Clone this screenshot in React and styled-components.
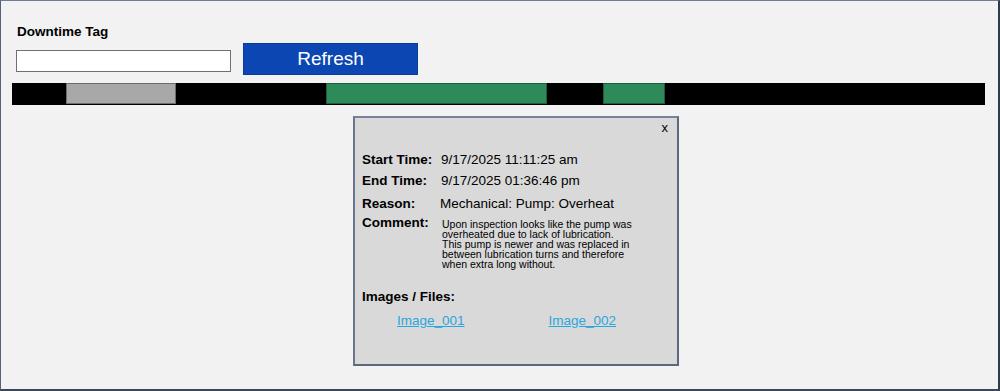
import React from 'react';
import styled, { createGlobalStyle } from 'styled-components';

const GlobalStyle = createGlobalStyle`
  html, body {
    margin: 0;
    padding: 0;
    background: #f2f2f2;
  }
  * {
    box-sizing: border-box;
  }
`;

const Frame = styled.div`
  width: 1000px;
  height: 391px;
  background: #f2f2f2;
  border-top: 1px solid #6f7b93;
  border-left: 1px solid #55627a;
  border-right: 2px solid #2f3a4b;
  border-bottom: 2px solid #3b4659;
  padding: 0 0 0 11px;
  font-family: 'Liberation Sans', Arial, sans-serif;
  color: #000;
`;

const Header = styled.div`
  padding-left: 4px;
`;

const Label = styled.div`
  margin-top: 23px;
  font-size: 13.5px;
  font-weight: bold;
  line-height: 15px;
  padding-left: 1px;
`;

const Controls = styled.div`
  display: flex;
  align-items: flex-start;
  gap: 12px;
  margin-top: 4px;
`;

const TagInput = styled.input`
  width: 215px;
  height: 22px;
  margin-top: 7px;
  border: 1px solid #707070;
  background: #fff;
  padding: 0 4px;
  font: inherit;
  outline: none;
`;

const RefreshButton = styled.button`
  width: 175px;
  height: 32px;
  background: #0b46b3;
  border: 1px solid #0a3c9a;
  color: #fff;
  font-family: 'Liberation Sans', Arial, sans-serif;
  font-size: 19px;
  padding: 0;
  cursor: pointer;
`;

const Timeline = styled.div`
  position: relative;
  width: 973px;
  height: 22px;
  margin-top: 8px;
  background: #000;
`;

const Segment = styled.div`
  position: absolute;
  top: 0;
  height: 21px;
  background: ${({ $kind }) => ($kind === 'idle' ? '#a8a8a8' : '#2f8a5a')};
  border: 1px solid ${({ $kind }) => ($kind === 'idle' ? '#6c6c6c' : '#1f5c3d')};
`;

const Popup = styled.div`
  width: 326px;
  height: 250px;
  margin: 11px 0 0 341px;
  background: #d9d9d9;
  border: 2px solid #5d687c;
  border-top-color: #77839a;
  border-left-color: #6a768c;
  padding: 0 8px 0 7px;
`;

const CloseRow = styled.div`
  display: flex;
  justify-content: flex-end;
  height: 20px;
  line-height: 20px;
  font-size: 13px;
  padding-right: 1px;
  cursor: pointer;
`;

const Field = styled.div`
  display: grid;
  grid-template-columns: 79px 1fr;
  margin-top: ${({ $mt }) => $mt}px;
  line-height: 18px;
`;

const FieldLabel = styled.div`
  font-size: 13.5px;
  font-weight: bold;
`;

const FieldValue = styled.div`
  font-size: 13.5px;
  margin-left: ${({ $shift }) => $shift || 0}px;
`;

const Comment = styled.div`
  font-size: 10.5px;
  line-height: 10px;
  padding-top: 5px;
  margin-left: 1px;
`;

const SectionTitle = styled.div`
  margin-top: 19px;
  font-size: 13.5px;
  font-weight: bold;
  line-height: 18px;
`;

const Links = styled.div`
  display: flex;
  gap: 84px;
  margin-top: 6px;
  padding-left: 35px;
  line-height: 18px;
`;

const FileLink = styled.a`
  color: #2aa6de;
  font-size: 13.5px;
  text-decoration: underline;
`;

const segments = [
  { kind: 'idle', left: 54, width: 110 },
  { kind: 'run', left: 314, width: 221 },
  { kind: 'run', left: 591, width: 62 },
];

const commentLines = [
  'Upon inspection looks like the pump was',
  'overheated due to lack of lubrication.',
  'This pump is newer and was replaced in',
  'between lubrication turns and therefore',
  'when extra long without.',
];

export default function App() {
  return (
    <>
      <GlobalStyle />
      <Frame>
        <Header>
          <Label>Downtime Tag</Label>
          <Controls>
            <TagInput type="text" />
            <RefreshButton>Refresh</RefreshButton>
          </Controls>
        </Header>
        <Timeline>
          {segments.map((s, i) => (
            <Segment key={i} $kind={s.kind} style={{ left: s.left, width: s.width }} />
          ))}
        </Timeline>
        <Popup>
          <CloseRow>x</CloseRow>
          <Field $mt={13}>
            <FieldLabel>Start Time:</FieldLabel>
            <FieldValue>9/17/2025 11:11:25 am</FieldValue>
          </Field>
          <Field $mt={3}>
            <FieldLabel>End Time:</FieldLabel>
            <FieldValue>9/17/2025 01:36:46 pm</FieldValue>
          </Field>
          <Field $mt={5}>
            <FieldLabel>Reason:</FieldLabel>
            <FieldValue $shift={-1}>Mechanical: Pump: Overheat</FieldValue>
          </Field>
          <Field $mt={1}>
            <FieldLabel>Comment:</FieldLabel>
            <Comment>
              {commentLines.map((line, i) => (
                <div key={i}>{line}</div>
              ))}
            </Comment>
          </Field>
          <SectionTitle>Images / Files:</SectionTitle>
          <Links>
            <FileLink href="#">Image_001</FileLink>
            <FileLink href="#">Image_002</FileLink>
          </Links>
        </Popup>
      </Frame>
    </>
  );
}
